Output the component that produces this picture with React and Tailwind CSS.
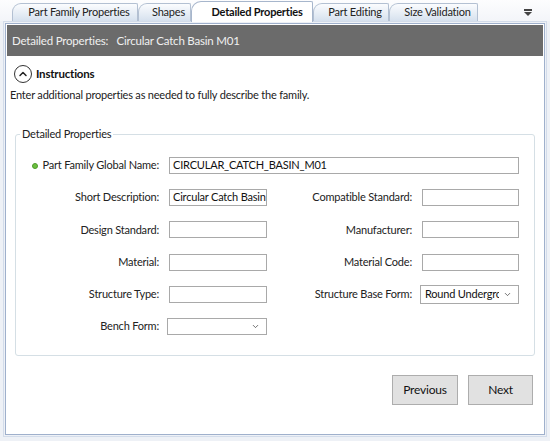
import { ChevronDown, ChevronUp } from 'lucide-react';

const TABS = [
    { label: 'Part Family Properties', w: 'w-[126px]' },
    { label: 'Shapes', w: 'w-[53px]' },
    { label: 'Detailed Properties', w: 'w-[122px]', active: true },
    { label: 'Part Editing', w: 'w-[76px]' },
    { label: 'Size Validation', w: 'w-[89px]' },
];

function Tab({ label, w, active }) {
    if (active) {
        return (
            <div
                className={`${w} h-[21px] -mb-px z-10 flex items-center justify-center pl-[10px] rounded-tl-[10px] rounded-tr-[2px] border border-b-0 border-[#a7b6cc] bg-white font-bold text-[#111]`}
            >
                {label}
            </div>
        );
    }
    return (
        <div
            className={`${w} h-[18px] flex items-center justify-center pl-[8px] rounded-tl-[9px] rounded-tr-[2px] border border-b-0 border-[#b3c0d2] bg-gradient-to-b from-[#fbfcfe] to-[#d6e1ee] text-[#222]`}
        >
            {label}
        </div>
    );
}

function Input({ value, wide }) {
    return (
        <div
            className={`h-[17px] ${wide ? 'col-span-3' : ''} border border-[#a9a9a9] bg-white px-[3px] flex items-center overflow-hidden whitespace-nowrap text-[#111]`}
        >
            {value}
        </div>
    );
}

function Combo({ value, tall }) {
    return (
        <div
            className={`${tall ? 'h-[19px] -my-px -ml-[2px]' : 'h-[17px] -ml-[2px]'} border border-[#a9a9a9] bg-white pl-[4px] pr-[6px] flex items-center gap-[4px] overflow-hidden whitespace-nowrap text-[#111]`}
        >
            <span className="flex-1 min-w-0 overflow-hidden">{value}</span>
            <ChevronDown size={9} strokeWidth={2} className="text-[#444] shrink-0" />
        </div>
    );
}

function Label({ children, dot }) {
    return (
        <div className="flex items-center justify-end gap-[5px] whitespace-nowrap text-[#222]">
            {dot && <span className="w-[6px] h-[6px] rounded-full bg-[#6cbf3f] border border-[#4d9b2a]" />}
            {children}
        </div>
    );
}

export default function App() {
    return (
        <div
            className="w-[550px] h-[441px] bg-[#eef1f6] flex flex-col text-[11px] tracking-[-0.2px] overflow-hidden"
            style={{ fontFamily: 'Lato, "Noto Sans", sans-serif' }}
        >
            <div className="h-[21px] flex items-end pl-[12px] bg-gradient-to-b from-[#fdfdfe] to-[#f3f5f9]">
                {TABS.map((t) => (
                    <Tab key={t.label} {...t} />
                ))}
                <div className="ml-auto mr-[18px] mb-[5px] flex flex-col items-center">
                    <span className="w-[8px] h-[2px] bg-[#444] mb-[1px]" />
                    <span className="w-0 h-0 border-x-[4px] border-x-transparent border-t-[4px] border-t-[#444]" />
                </div>
            </div>

            <div className="mx-[3px] h-[416px] border border-[#d3dcea] p-px">
                <div className="h-full border border-[#9fb0cc] bg-white p-[1px] flex flex-col">
                    <div className="h-[31px] bg-[#6b6b6b] text-[#f0f0f0] text-[11.5px] flex items-center pl-[5px]">
                        Detailed Properties:&nbsp;&nbsp;&nbsp;Circular Catch Basin M01
                    </div>

                    <div className="flex items-center gap-[4px] pl-[7px] mt-[9px]">
                        <span className="w-[18px] h-[18px] rounded-full border-[1.5px] border-[#333] flex items-center justify-center">
                            <ChevronUp size={12} strokeWidth={3} className="text-[#222]" />
                        </span>
                        <span className="font-bold text-[11.5px] text-[#111]">Instructions</span>
                    </div>
                    <div className="pl-[3px] mt-[4px] text-[#222]">
                        Enter additional properties as needed to fully describe the family.
                    </div>

                    <div className="mx-[8px] mt-[30px] h-[222px] border border-[#d5dfe5] rounded-[3px] flex flex-col">
                        <div className="-mt-[9px] ml-[4px] px-[2px] bg-white self-start text-[#222]">
                            Detailed Properties
                        </div>
                        <div className="mt-[15px] grid grid-cols-[143px_98px_135px_97px] gap-x-[10px] gap-y-[15.2px] auto-rows-[17px] items-center">
                            <Label dot>Part Family Global Name:</Label>
                            <Input value="CIRCULAR_CATCH_BASIN_M01" wide />

                            <Label>Short Description:</Label>
                            <Input value="Circular Catch Basin M01" />
                            <Label>Compatible Standard:</Label>
                            <Input />

                            <Label>Design Standard:</Label>
                            <Input />
                            <Label>Manufacturer:</Label>
                            <Input />

                            <Label>Material:</Label>
                            <Input />
                            <Label>Material Code:</Label>
                            <Input />

                            <Label>Structure Type:</Label>
                            <Input />
                            <Label>Structure Base Form:</Label>
                            <Combo value="Round Underground" tall />

                            <Label>Bench Form:</Label>
                            <Combo />
                        </div>
                    </div>

                    <div className="flex justify-end gap-[10px] mt-[19px] mr-[10px]">
                        <button className="w-[66px] h-[30px] bg-[#e1e1e1] border border-[#adadad] text-[12px] text-[#111]">
                            Previous
                        </button>
                        <button className="w-[65px] h-[30px] bg-[#e1e1e1] border border-[#adadad] text-[12px] text-[#111]">
                            Next
                        </button>
                    </div>
                </div>
            </div>
        </div>
    );
}
